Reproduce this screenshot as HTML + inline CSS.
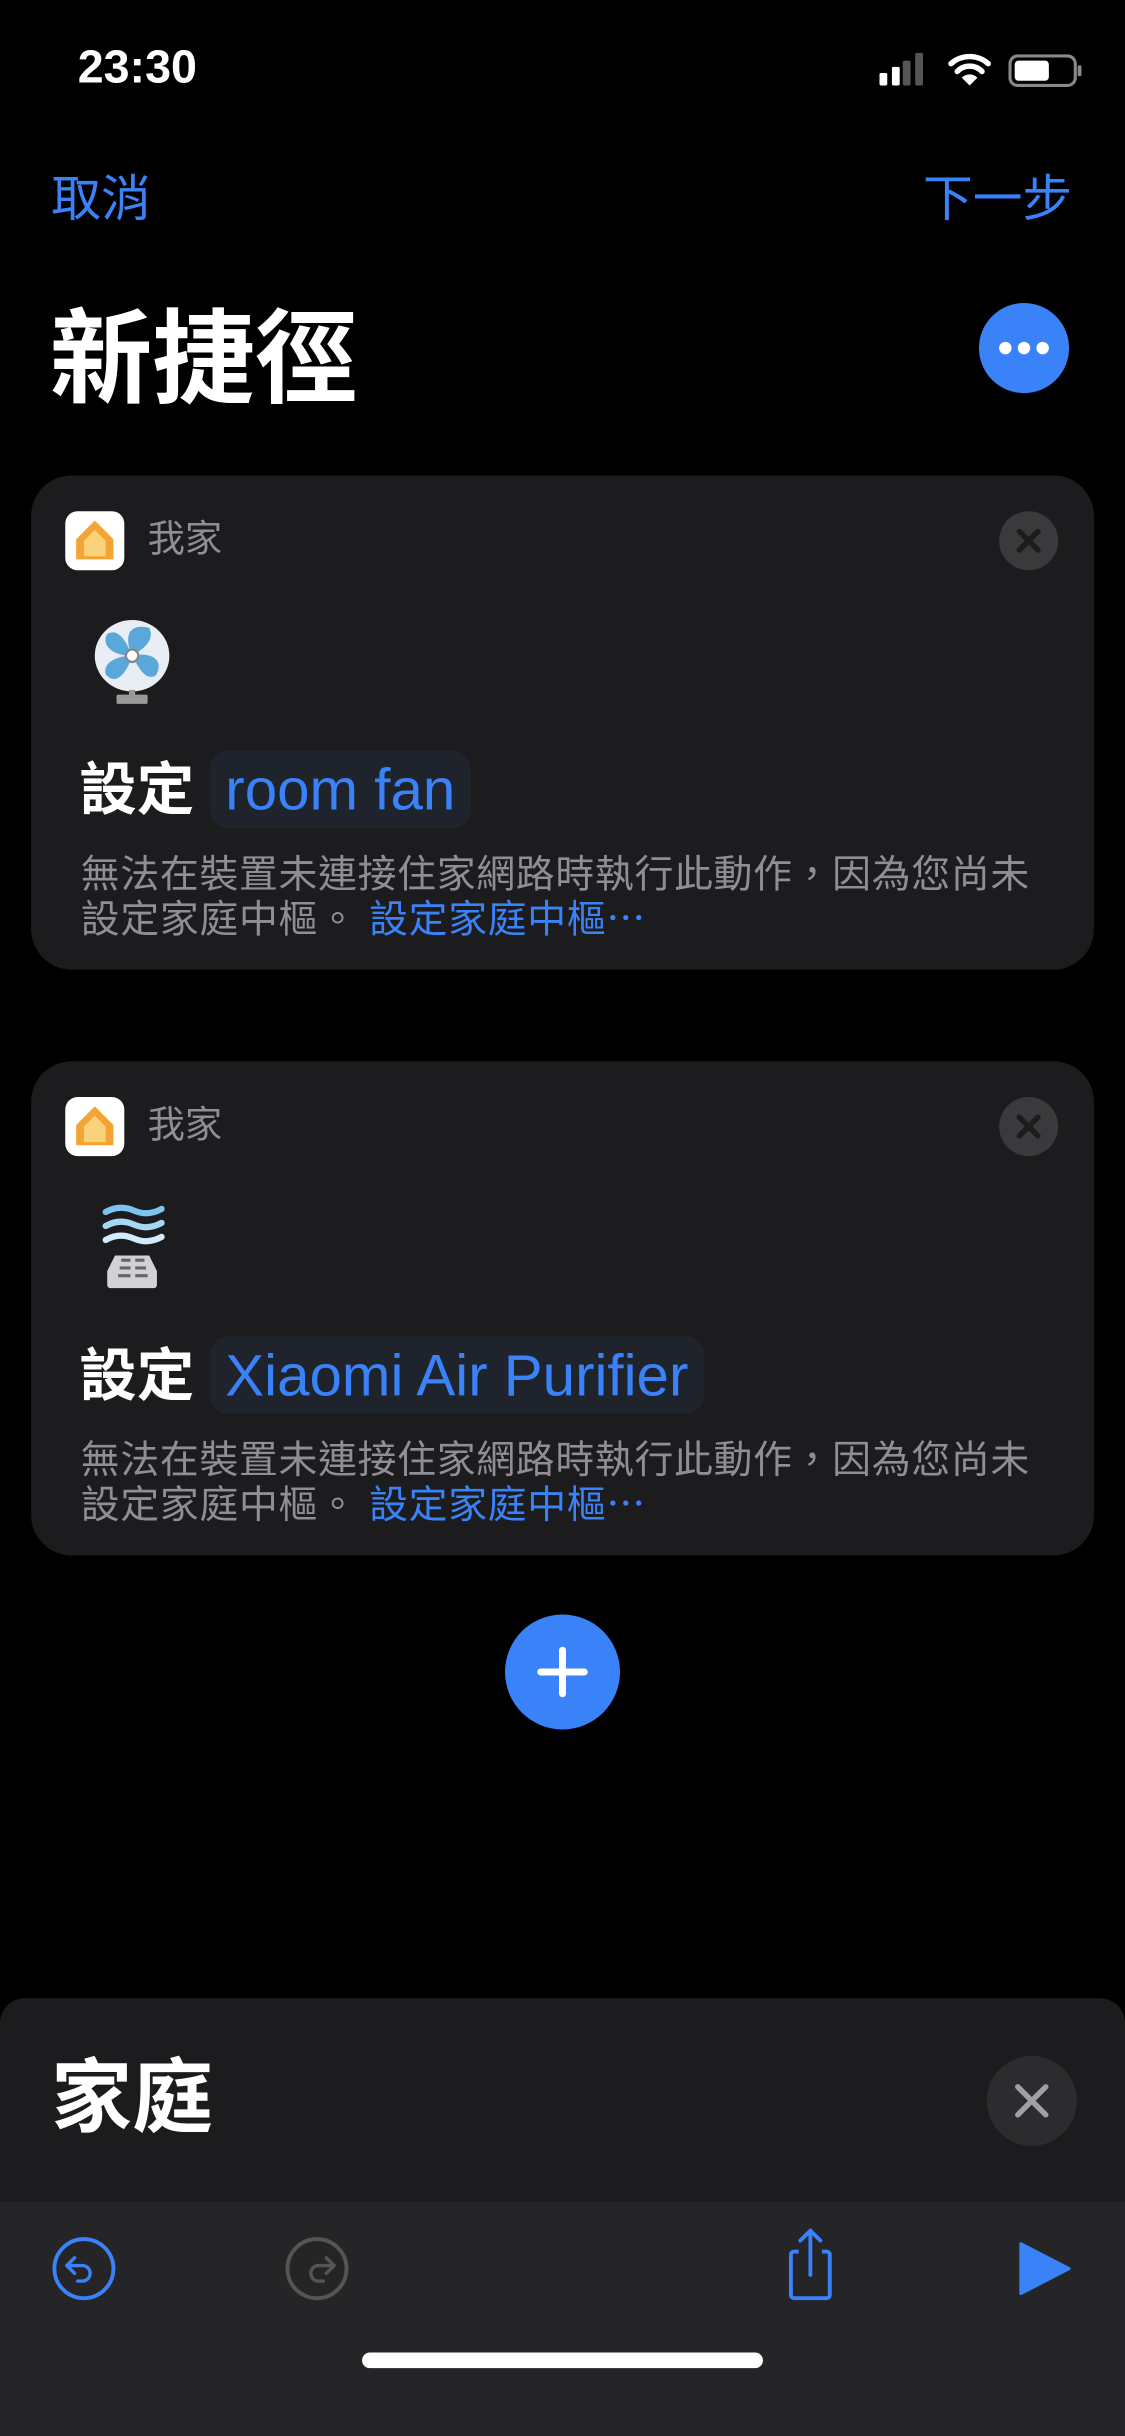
<!DOCTYPE html>
<html><head><meta charset="utf-8"><style>
html,body{margin:0;padding:0;background:#000;width:1125px;height:2436px;overflow:hidden}
#w{position:absolute;left:0;top:0;width:724px;height:1568px;transform:scale(1.55387);transform-origin:0 0;font-family:"Liberation Sans","Noto Sans CJK TC",sans-serif;color:#fff}
.a{position:absolute}
.blue{color:#3a82f7}
.card{position:absolute;left:20px;width:684px;height:318px;background:#1c1c1e;border-radius:26px}
.hi{position:absolute;left:22px;top:23px;width:38px;height:38px;background:#fff;border-radius:8px}
.hn{position:absolute;left:75px;top:28px;font-size:24px;color:#8e8e93;line-height:28px}
.cx{position:absolute;left:623px;top:23px;width:38px;height:38px;border-radius:50%;background:#3a3a3c}
.set{position:absolute;left:31px;top:181px;font-size:37px;font-weight:bold;line-height:44px}
.pill{position:absolute;left:115px;top:177px;height:50px;border-radius:12px;background:#1f232c;color:#3a82f7;font-size:37.5px;line-height:50px;padding:0 10px}
.desc{position:absolute;left:32px;top:243px;width:630px;font-size:25px;letter-spacing:0.45px;line-height:29px;color:#8e8e93}
</style></head><body><div id="w">
<div class="a" style="left:50px;top:27px;font-size:30px;font-weight:bold;line-height:34px">23:30</div>
<svg class="a" style="left:566px;top:33px" width="130" height="24" viewBox="0 0 130 24">
<rect x="0" y="14" width="5" height="8" rx="1" fill="#fff"/><rect x="8" y="10" width="5" height="12" rx="1" fill="#fff"/><rect x="15" y="6" width="5" height="16" rx="1" fill="#555"/><rect x="23" y="1" width="5" height="21" rx="1" fill="#555"/>
<path d="M46 8a18 18 0 0 1 24 0M50 13a11 11 0 0 1 16 0" stroke="#fff" stroke-width="3.5" fill="none" stroke-linecap="round"/><path d="M53 17l5 5 5-5a7 7 0 0 0-10 0z" fill="#fff"/>
<rect x="84" y="3" width="42" height="19" rx="5" fill="none" stroke="#888" stroke-width="2"/><rect x="87" y="6" width="22" height="13" rx="2.5" fill="#fff"/><rect x="127.5" y="9" width="2.5" height="7" rx="1" fill="#888"/>
</svg>
<div class="a blue" style="left:33px;top:110px;font-size:32px;line-height:36px">取消</div>
<div class="a blue" style="right:34px;top:110px;font-size:32px;line-height:36px">下一步</div>
<div class="a" style="left:32px;top:193px;font-size:66px;font-weight:bold;line-height:76px">新捷徑</div>
<div class="a" style="left:630px;top:195px;width:58px;height:58px;border-radius:50%;background:#3a82f7"><svg width="58" height="58"><circle cx="17" cy="29" r="4" fill="#fff"/><circle cx="29" cy="29" r="4" fill="#fff"/><circle cx="41" cy="29" r="4" fill="#fff"/></svg></div>

<div class="card" style="top:306px">
<div class="hi"><svg width="38" height="38"><path d="M19 6l-12 12v13h24V18z" fill="#f4a433"/><path d="M19 12l-7 7v10h14V19z" fill="#f9d27a"/></svg></div>
<div class="hn">我家</div>
<div class="cx"><svg width="38" height="38"><path d="M13 13l12 12M25 13l-12 12" stroke="#1c1c1e" stroke-width="3.5" stroke-linecap="round"/></svg></div>
<svg class="a" style="left:40px;top:92px" width="50" height="56" viewBox="0 0 50 56"><ellipse cx="25" cy="24" rx="24" ry="23" fill="#e8eef4"/><path d="M25 24C19 10 24 3 36 6 40 14 32 20 25 24ZM25 24C39 21 46 28 40 37 33 40 29 31 25 24ZM25 24C21 37 14 43 8 36 6 28 16 24 25 24ZM25 24C12 24 5 17 9 10 16 6 21 14 25 24Z" fill="#5aa8d9"/><circle cx="25" cy="24" r="4" fill="#fff" stroke="#888" stroke-width="1.5"/><rect x="23" y="46" width="4" height="5" fill="#999"/><rect x="15" y="49" width="20" height="6" rx="1" fill="#999"/></svg>
<div class="set">設定</div>
<div class="pill">room fan</div>
<div class="desc">無法在裝置未連接住家網路時執行此動作，因為您尚未設定家庭中樞。 <span class="blue">設定家庭中樞⋯</span></div>
</div>

<div class="card" style="top:683px">
<div class="hi"><svg width="38" height="38"><path d="M19 6l-12 12v13h24V18z" fill="#f4a433"/><path d="M19 12l-7 7v10h14V19z" fill="#f9d27a"/></svg></div>
<div class="hn">我家</div>
<div class="cx"><svg width="38" height="38"><path d="M13 13l12 12M25 13l-12 12" stroke="#1c1c1e" stroke-width="3.5" stroke-linecap="round"/></svg></div>
<svg class="a" style="left:46px;top:89px" width="40" height="58" viewBox="0 0 40 58"><path d="M2 8q9-5 18-1t18-1" stroke="#7cc4ef" stroke-width="4" fill="none" stroke-linecap="round"/><path d="M2 17q9-5 18-1t18-1" stroke="#a6d8f6" stroke-width="4" fill="none" stroke-linecap="round"/><path d="M2 26q9-5 18-1t18-1" stroke="#d2ecfb" stroke-width="4" fill="none" stroke-linecap="round"/><path d="M8 36h22l5 10v9a2 2 0 0 1-2 2H5a2 2 0 0 1-2-2v-9z" fill="#d1d1d6"/><path d="M12 39h6M21 39h6M11 44h7M21 44h7M10 49h8M21 49h8" stroke="#666" stroke-width="2"/></svg>
<div class="set">設定</div>
<div class="pill">Xiaomi Air Purifier</div>
<div class="desc">無法在裝置未連接住家網路時執行此動作，因為您尚未設定家庭中樞。 <span class="blue">設定家庭中樞⋯</span></div>
</div>

<div class="a" style="left:325px;top:1039px;width:74px;height:74px;border-radius:50%;background:#3a82f7"><svg width="74" height="74"><path d="M37 23v28M23 37h28" stroke="#fff" stroke-width="4.5" stroke-linecap="round"/></svg></div>

<div class="a" style="left:0;top:1286px;width:724px;height:282px;background:#1c1c1e;border-radius:16px 16px 0 0"></div>
<div class="a" style="left:33px;top:1320px;font-size:52px;font-weight:bold;line-height:62px">家庭</div>
<div class="a" style="left:635px;top:1323px;width:58px;height:58px;border-radius:50%;background:#2c2c2e"><svg width="58" height="58"><path d="M20 20l18 18M38 20l-18 18" stroke="#a0a0a5" stroke-width="3.5" stroke-linecap="round"/></svg></div>
<div class="a" style="left:0;top:1417px;width:724px;height:151px;background:#252527"></div>
<svg class="a" style="left:0;top:1417px" width="724" height="151">
<circle cx="54" cy="43" r="19" fill="none" stroke="#3a82f7" stroke-width="2.5"/><path d="M48 36l-5 5 5 5M43 41h10a5 5 0 0 1 0 10h-3" fill="none" stroke="#3a82f7" stroke-width="2.2" stroke-linecap="round" stroke-linejoin="round"/>
<circle cx="204" cy="43" r="19" fill="none" stroke="#555" stroke-width="2.5"/><path d="M210 36l5 5-5 5M215 41h-10a5 5 0 0 0 0 10h3" fill="none" stroke="#555" stroke-width="2.2" stroke-linecap="round" stroke-linejoin="round"/>
<path d="M514 32h-3a2 2 0 0 0-2 2v26a2 2 0 0 0 2 2h21a2 2 0 0 0 2-2V34a2 2 0 0 0-2-2h-3" fill="none" stroke="#3a82f7" stroke-width="2.5"/><path d="M521.5 19v28M515 25l6.5-6.5 6.5 6.5" fill="none" stroke="#3a82f7" stroke-width="2.5" stroke-linecap="round" stroke-linejoin="round"/>
<path d="M657 27v32l31-16z" fill="#3a82f7" stroke="#3a82f7" stroke-width="2" stroke-linejoin="round"/>
<rect x="233" y="97" width="258" height="10" rx="5" fill="#fff"/>
</svg>
</div></body></html>
